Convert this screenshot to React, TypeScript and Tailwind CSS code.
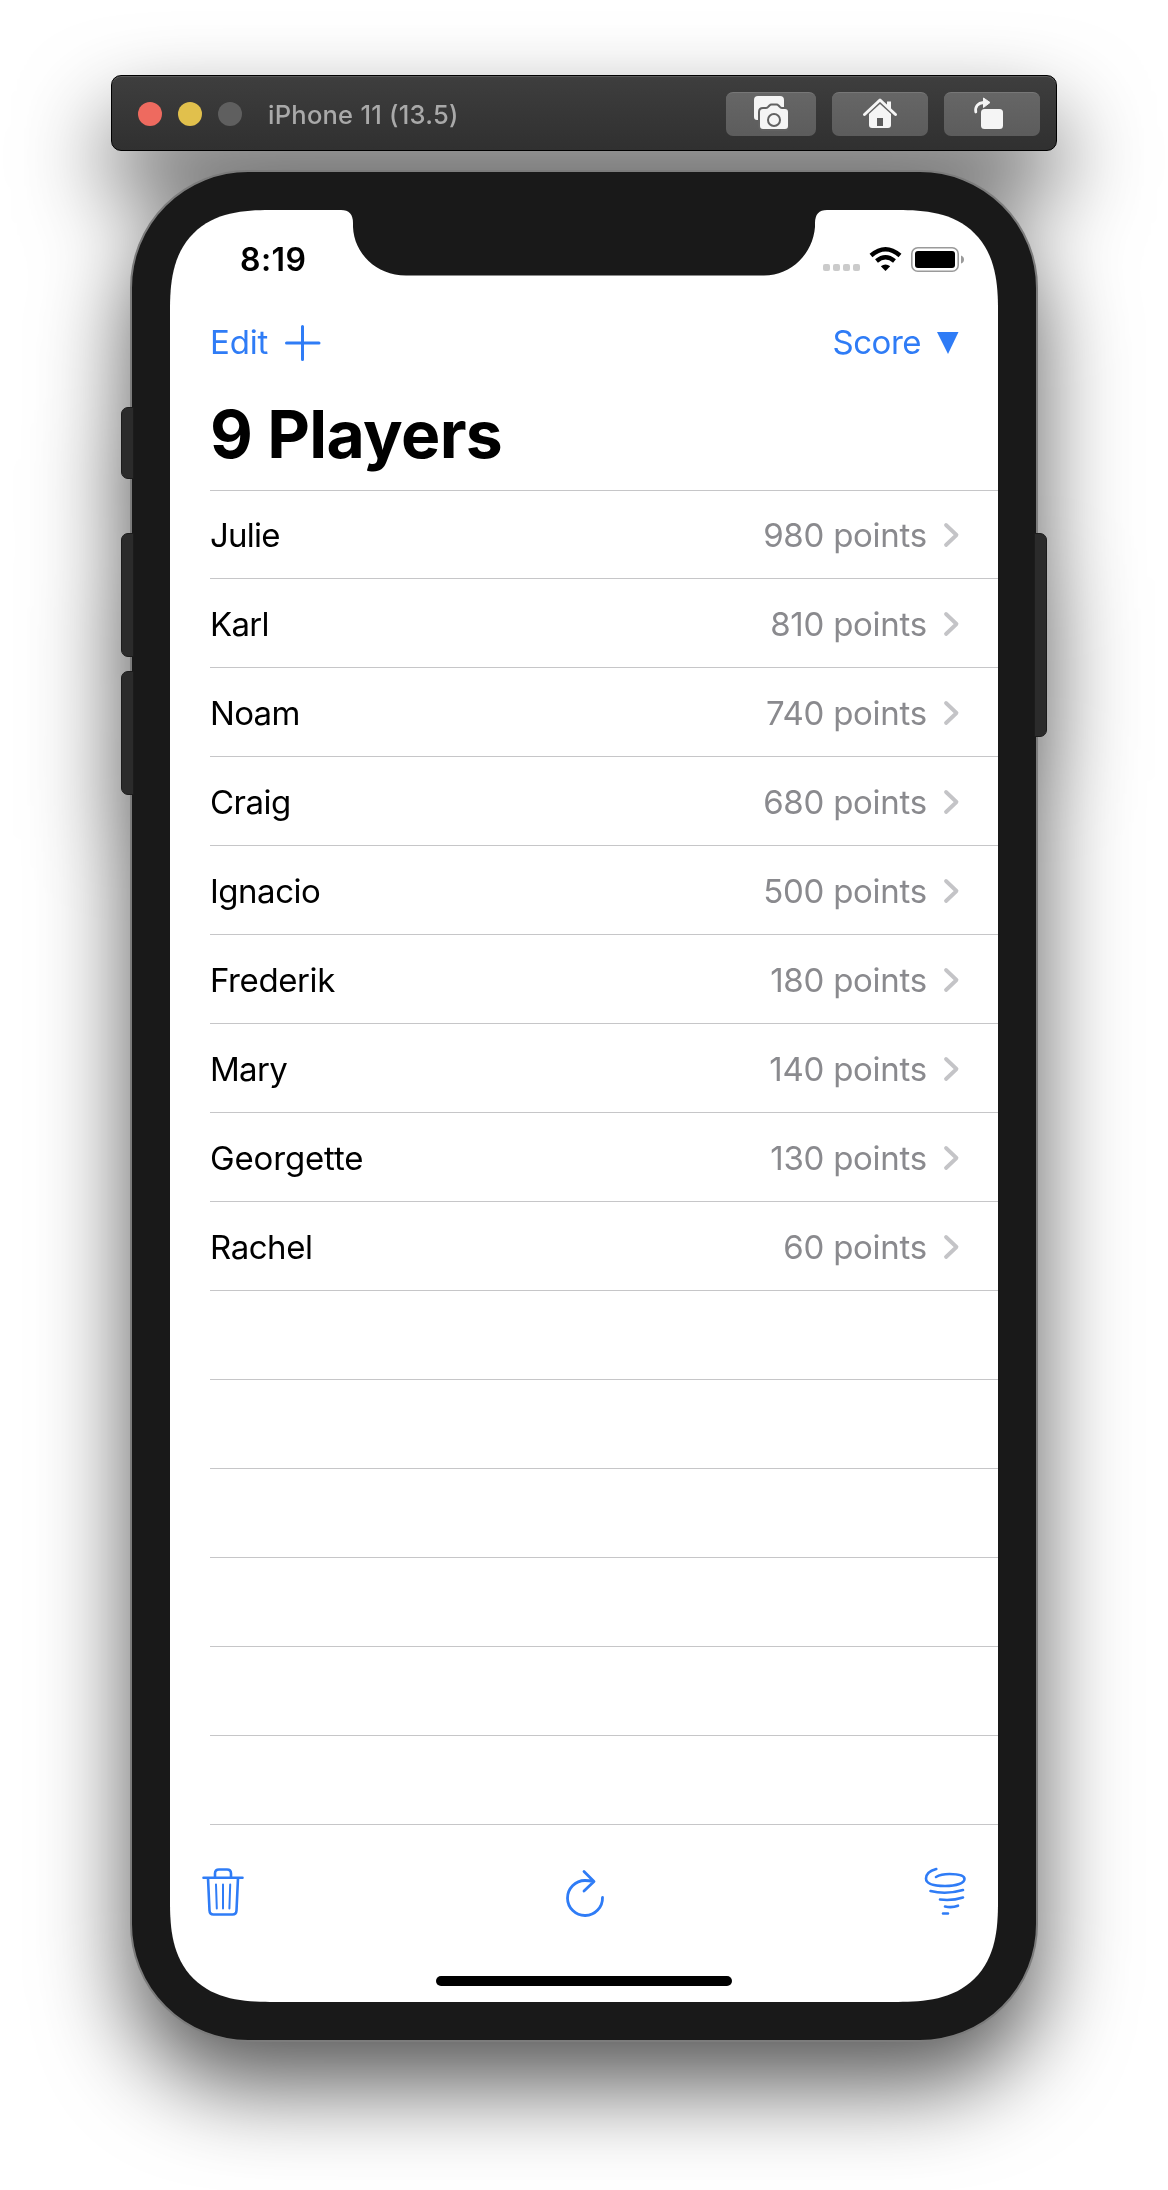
import type { ReactNode } from "react";

type Player = { name: string; score: number; nameTrack: string };

const players: Player[] = [
  { name: "Julie", score: 980, nameTrack: "tracking-[-0.75px]" },
  { name: "Karl", score: 810, nameTrack: "tracking-[-0.7px]" },
  { name: "Noam", score: 740, nameTrack: "tracking-[-0.7px]" },
  { name: "Craig", score: 680, nameTrack: "tracking-[-0.5px]" },
  { name: "Ignacio", score: 500, nameTrack: "tracking-[-0.5px]" },
  { name: "Frederik", score: 180, nameTrack: "tracking-[-0.4px]" },
  { name: "Mary", score: 140, nameTrack: "tracking-[-0.7px]" },
  { name: "Georgette", score: 130, nameTrack: "tracking-[-0.15px]" },
  { name: "Rachel", score: 60, nameTrack: "tracking-[-0.45px]" },
];

const emptyRows = [0, 1, 2, 3, 4, 5];

function WindowButton({ className, children }: { className: string; children: ReactNode }) {
  return (
    <button className={`h-11 rounded-[7px] border-t border-[#777] bg-linear-to-b from-[#666] to-[#5c5c5c] ${className}`}>
      {children}
    </button>
  );
}

function TitleBar() {
  return (
    <header className="ml-[111px] flex h-[76px] w-[946px] items-center rounded-[10px] border border-black bg-linear-to-b from-[#3e3e3e] to-[#303030] pl-[26px] pr-4 shadow-[inset_0_1px_0_#5a5a5a]">
      <div className="flex gap-4 pt-0.5">
        <span className="size-6 rounded-full bg-[#ee6a5f]" />
        <span className="size-6 rounded-full bg-[#e1c04c]" />
        <span className="size-6 rounded-full bg-[#5f5f5f]" />
      </div>
      <h2 className="ml-[26px] whitespace-nowrap pt-1 text-[25.500px] font-medium leading-8 tracking-[0.25px] text-[#a9a9a9]">iPhone 11 (13.5)</h2>
      <div className="ml-auto flex gap-4 pt-px">
        <WindowButton className="w-[90px]">
          <svg className="ml-[27px] block" width="36" height="36" viewBox="0 0 36 36">
            <path d="M5 0h22q4 0 4 4v14H12v6H4q-3 0-3-3V4q0-4 4-4z" fill="#f5f5f5" />
            <path d="M10 12h3q1.500 0 2.500-1.500l1-1q.8-1 2-1h5q1.200 0 2 1l1 1q1 1.500 2.500 1.500h3q4 0 4 4v14q0 4-4 4H10q-4 0-4-4V16q0-4 4-4z" fill="#f5f5f5" stroke="#626262" strokeWidth="2" />
            <circle cx="21" cy="24" r="6" fill="none" stroke="#626262" strokeWidth="2" />
          </svg>
        </WindowButton>
        <WindowButton className="w-24">
          <svg className="ml-[30px] block" width="36" height="36" viewBox="0 0 36 36">
            <path d="M2.500 18.500 18 4l15.500 14.500" fill="none" stroke="#f5f5f5" strokeWidth="3" strokeLinecap="round" strokeLinejoin="round" />
            <path d="M25 5.500h4v8l-4-4z" fill="#f5f5f5" />
            <path d="M7 18 18 8l11 10v11q0 3-3 3H10q-3 0-3-3z" fill="#f5f5f5" />
            <path d="M15 22h6v8h-6z" fill="#5c5c5c" />
          </svg>
        </WindowButton>
        <WindowButton className="w-24">
          <svg className="ml-[28px] block" width="36" height="36" viewBox="0 0 36 36">
            <path d="M3.800 16C2.800 10.800 6 7 11.500 6.500" fill="none" stroke="#f5f5f5" strokeWidth="2.800" strokeLinecap="round" />
            <path d="M11.500 2v9.500l6.500-5z" fill="#f5f5f5" stroke="#f5f5f5" strokeLinejoin="round" />
            <rect x="9" y="13" width="22" height="20" rx="3.500" fill="#f5f5f5" />
          </svg>
        </WindowButton>
      </div>
    </header>
  );
}

function Notch() {
  return (
    <svg className="absolute left-[170px] top-[-1px]" width="488" height="67" viewBox="0 0 488 67">
      <path d="M0 0H488V1H487Q475 1 475 14V18C473 44 452 66.500 424 66.500H66C36 66.500 14 44 13 18V14Q13 1 1 1H0z" fill="#191919" />
    </svg>
  );
}

function StatusBar() {
  return (
    <div className="flex h-[98px] pt-8">
      <span className="ml-[70px] text-[32px] font-semibold leading-9 tracking-[0.45px]">8:19</span>
      <svg className="ml-auto mr-[34px]" width="142" height="34" viewBox="0 0 142 34">
        {[0, 10, 20, 30].map((x) => (
          <rect key={x} x={x + 1} y="22" width="7" height="7" rx="2" fill="#cbcbcb" />
        ))}
        <g fill="none" stroke="#000" strokeWidth="4.400">
          <path d="M49 13.500Q63.500 1 78 13.500" />
          <path d="M54.500 19Q63.500 11.500 72.500 19" />
        </g>
        <path d="M63.500 29 58.800 24.300Q63.500 20.700 68.200 24.300z" />
        <rect x="89.800" y="5.800" width="46.400" height="23.400" rx="6" fill="none" stroke="#9a9a9a" strokeWidth="1.600" />
        <rect x="93" y="9" width="40" height="17" rx="3" />
        <path d="M139 13.500q3 1 3 4t-3 4z" fill="#9a9a9a" />
      </svg>
    </div>
  );
}

function NavBar() {
  return (
    <nav className="flex h-[88px] items-center pl-10 pr-[39px] text-[33px] leading-10 text-[#2f7cf6]">
      <span className="pb-[20px] tracking-[-0.15px]">Edit</span>
      <svg className="absolute left-[115px] top-[115px]" width="36" height="36" viewBox="0 0 36 36" fill="none" stroke="currentColor" strokeWidth="3" strokeLinecap="round">
        <path d="M1.500 18h32.500M17.500 1.500v33" />
      </svg>
      <span className="ml-auto pb-[20px] tracking-[-0.5px]">Score</span>
      <svg className="mb-[20px] ml-4" width="22" height="24" viewBox="0 0 22 24" fill="currentColor">
        <path d="M0 2h21.500L11 24z" />
      </svg>
    </nav>
  );
}

function PlayerRow({ player }: { player: Player }) {
  return (
    <li className="flex h-[89px] items-center border-b border-[#c6c6c8] pr-[38px] pt-0.5 text-[33px] leading-10 first:h-[88px] first:pt-0">
      <span className={player.nameTrack}>{player.name}</span>
      <span className="ml-auto tracking-[-0.25px] text-[#8a8a8e]">{player.score} points</span>
      <svg className="ml-[15px]" width="18" height="26" viewBox="0 0 18 26" fill="none" stroke="#c4c4c7" strokeWidth="3.800" strokeLinecap="round" strokeLinejoin="round">
        <path d="M4 3 14.500 13 4 23" />
      </svg>
    </li>
  );
}

function ToolBar() {
  return (
    <footer className="flex justify-between pl-8 pr-8 pt-[42px] text-[#2f7cf6]">
      <svg width="42" height="50" viewBox="0 0 42 50" fill="none" stroke="currentColor" strokeWidth="2.600" strokeLinecap="round" strokeLinejoin="round">
        <path d="M1.500 10.700h39M13 10V6.500q0-4 4-4h8q4 0 4 4V10M6 11l1.500 32.500q.2 4 4 4h19q3.800 0 4-4L36 11" />
        <path d="m14 17.500.8 24M21 17.500v24M28.200 17.500l-.8 24" strokeWidth="2" />
      </svg>
      <svg className="ml-[1px]" width="42" height="52" viewBox="0 0 42 52" fill="none" stroke="currentColor" strokeWidth="2.800" strokeLinecap="round" strokeLinejoin="round">
        <path d="M38.500 30.500A17.500 17.500 0 1 1 21 13.500Q25 13.500 29 14.500M20 4.500l10 10-10 9.500" />
      </svg>
      <svg width="42" height="50" viewBox="0 0 42 50" fill="none" stroke="currentColor" strokeWidth="2.600" strokeLinecap="round">
        <path d="M12.300 2C5 4 2 7.500 2 11.500 2 16.500 9 19 21 19S40.500 16 40.500 12 33 7 25.500 7Q17 7 12 10" />
        <path d="M6.500 24Q22 28 39 23M16 32.500Q28 34 39 30.500M21 39.500Q28 41 34 38.700M19 46.500h5" />
      </svg>
    </footer>
  );
}

function Screen() {
  return (
    <main className="relative h-[1792px] w-[828px] overflow-hidden rounded-[100px] bg-white text-black [corner-shape:superellipse(1.38)]">
      <Notch />
      <StatusBar />
      <NavBar />
      <h1 className="ml-10 h-[94px] whitespace-nowrap text-[66px] font-bold leading-[76px] tracking-[-0.65px]">9 Players</h1>
      <ul className="ml-10 border-t border-[#c6c6c8]">
        {players.map((p) => (
          <PlayerRow key={p.name} player={p} />
        ))}
        {emptyRows.map((i) => (
          <li key={i} className="h-[89px] border-b border-[#c6c6c8]" />
        ))}
      </ul>
      <ToolBar />
      <div className="absolute bottom-4 left-[266px] h-2.5 w-[296px] rounded-full bg-black" />
    </main>
  );
}

export default function App() {
  return (
    <div className="h-[2190px] w-[1168px] overflow-hidden bg-white font-['Inter','Liberation_Sans',sans-serif]">
      <div className="h-[2190px] pt-[75px] [filter:drop-shadow(0_44px_45px_rgba(0,0,0,0.65))]">
        <TitleBar />
        <div className="relative ml-[130px] mt-[19px] h-[1872px] w-[908px] rounded-[118px] border-2 border-[#7c7c7c] bg-[#191919] p-[38px]">
          <span className="absolute left-[-11px] top-[235px] h-[72px] w-[13px] rounded-l-[7px] border border-[#1c1c1c] bg-[#2b2b2b]" />
          <span className="absolute left-[-11px] top-[361px] h-[124px] w-[13px] rounded-l-[7px] border border-[#1c1c1c] bg-[#2b2b2b]" />
          <span className="absolute left-[-11px] top-[499px] h-[124px] w-[13px] rounded-l-[7px] border border-[#1c1c1c] bg-[#2b2b2b]" />
          <span className="absolute right-[-11px] top-[361px] h-[204px] w-[13px] rounded-r-[7px] border border-[#1c1c1c] bg-[#2b2b2b]" />
          <Screen />
        </div>
      </div>
    </div>
  );
}
